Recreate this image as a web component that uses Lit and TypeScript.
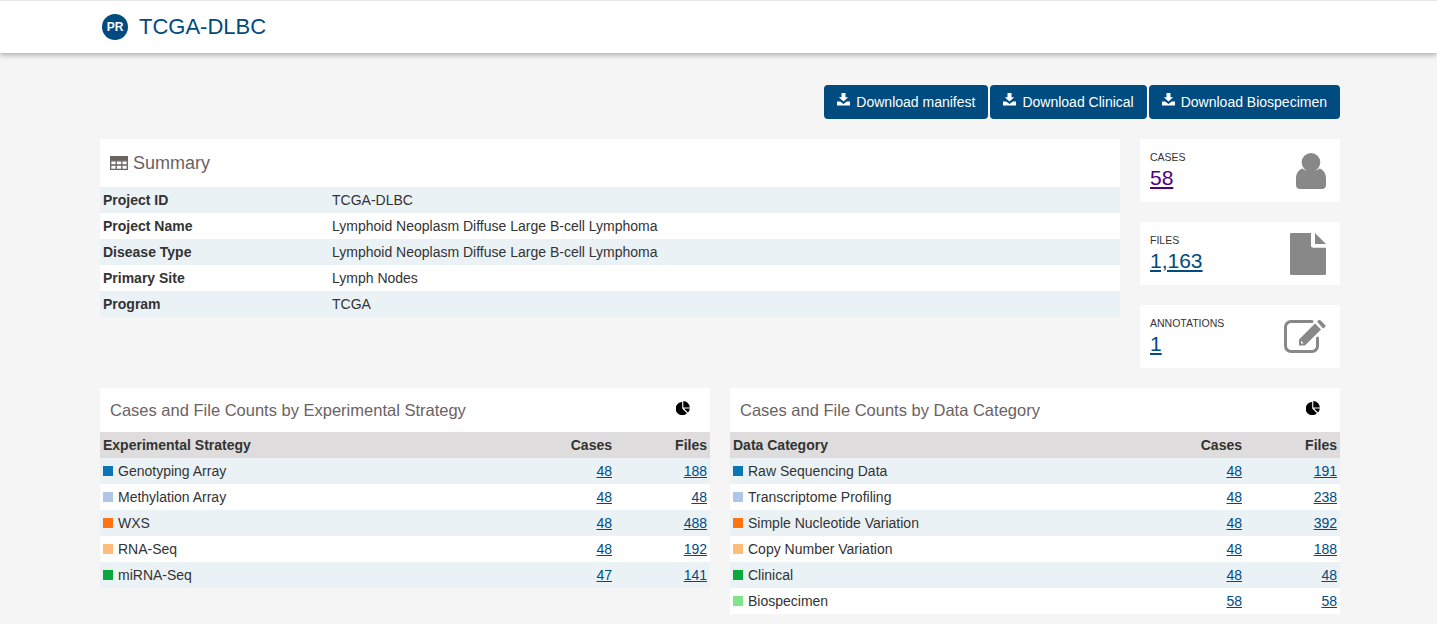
import { LitElement, html, css, svg } from "lit";
import { customElement } from "lit/decorators.js";

const SUMMARY = [
  ["Project ID", "TCGA-DLBC"],
  ["Project Name", "Lymphoid Neoplasm Diffuse Large B-cell Lymphoma"],
  ["Disease Type", "Lymphoid Neoplasm Diffuse Large B-cell Lymphoma"],
  ["Primary Site", "Lymph Nodes"],
  ["Program", "TCGA"],
];

const STRATEGY = [
  ["#0a75b5", "Genotyping Array", "48", "188"],
  ["#aec7e8", "Methylation Array", "48", "48"],
  ["#ff7310", "WXS", "48", "488"],
  ["#ffbb78", "RNA-Seq", "48", "192"],
  ["#0aa83c", "miRNA-Seq", "47", "141"],
];

const CATEGORY = [
  ["#0a75b5", "Raw Sequencing Data", "48", "191"],
  ["#aec7e8", "Transcriptome Profiling", "48", "238"],
  ["#ff7310", "Simple Nucleotide Variation", "48", "392"],
  ["#ffbb78", "Copy Number Variation", "48", "188"],
  ["#0aa83c", "Clinical", "48", "48"],
  ["#7fe58d", "Biospecimen", "58", "58"],
];

const downloadIcon = svg`<svg class="dl" viewBox="0 0 13 13" width="13" height="13">
  <path fill="#fff" d="M4.5 0h4v4.2h2.7L6.5 8.6 1.8 4.2h2.7z"/>
  <path fill="#fff" d="M0 8.4h3.2l3.3 2.6 3.3-2.6H13V12.4H0z"/>
</svg>`;

const tableIcon = svg`<svg viewBox="0 0 18 14" width="18" height="14">
  <path fill="none" stroke="#6b6262" stroke-width="1.3" d="M.7.7h16.6v12.6H.7zM.7 4.8h16.6M.7 9h16.6M6.2 4.8v8.5M11.8 4.8v8.5"/>
  <path fill="#6b6262" d="M.7.7h16.6v4H.7z"/>
</svg>`;

const pieIcon = svg`<svg viewBox="0 0 14 14" width="14" height="14">
  <path d="M6.2 1v6.6l4.7 4.7A6.6 6.6 0 1 1 6.2 1z"/>
  <path d="M7.3 0a6.6 6.6 0 0 1 6.5 6.4H7.3z"/>
  <path d="M8.1 7.6h5.7a6.6 6.6 0 0 1-1.9 3.9z"/>
</svg>`;

const userIcon = svg`<svg viewBox="0 0 30 36" width="30" height="36">
  <circle cx="15" cy="9.3" r="9.3" fill="#888"/>
  <path fill="#888" d="M6.5 15.5C9 18.6 21 18.6 23.5 15.5 27.6 16.8 30 20.5 30 26v6.2c0 2.2-1.7 3.8-3.8 3.8H3.8C1.7 36 0 34.4 0 32.2V26c0-5.5 2.4-9.2 6.5-10.500z"/>
</svg>`;

const fileIcon = svg`<svg viewBox="0 0 36 42" width="36" height="42">
  <path fill="#888" d="M1.500 0H21v12.500c0 1.300 1 2.300 2.300 2.300H36V40.500c0 .8-.7 1.500-1.500 1.500H1.500C.7 42 0 41.300 0 40.500V1.500C0 .7.7 0 1.500 0z"/>
  <path fill="#888" d="M25 0l11 11H25z"/>
</svg>`;

const editIcon = svg`<svg viewBox="0 0 42 33" width="42" height="33">
  <path fill="none" stroke="#888" stroke-width="3" stroke-linecap="round" d="M28 1.500H7A5.500 5.500 0 0 0 1.500 7v19A5.500 5.500 0 0 0 7 31.500h21a5.500 5.500 0 0 0 5.500-5.500V18"/>
  <path fill="#888" d="M15 19.500 31 3.500l6 6-16 16h-6z"/>
  <path fill="#888" d="M33 1.500l1.600-1.300c.6-.4 1.300-.4 1.800.1l4.800 4.800c.5.500.5 1.200 0 1.800L39 8.500z"/>
  <path fill="#fff" d="M17 21v2.500h2.500l-1-1.500z"/>
</svg>`;

@customElement("count-table")
export class CountTable extends LitElement {
  static properties = {
    heading: { type: String },
    label: { type: String },
    rows: { type: Array },
  };

  declare heading: string;
  declare label: string;
  declare rows: string[][];

  static styles = css`
    :host {
      display: block;
    }
    .title {
      height: 44px;
      background: #fff;
      padding: 0 10px;
      display: flex;
      justify-content: space-between;
      color: #6b6262;
      font-size: 16.500px;
    }
    .title span {
      line-height: 45px;
    }
    .title svg {
      margin: 13px 10px 0 0;
    }
    .row {
      display: grid;
      grid-template-columns: 1fr 95px 95px;
      height: 26px;
      line-height: 26px;
      padding: 0 3px;
      color: #333;
    }
    .row.head {
      background: #dedcdc;
      font-weight: 700;
    }
    .row:nth-child(even) {
      background: #ebf2f6;
    }
    .row:nth-child(odd) {
      background: #fff;
    }
    .row.head:nth-child(odd) {
      background: #dedcdc;
    }
    .num {
      text-align: right;
    }
    .name {
      display: flex;
      align-items: center;
    }
    .swatch {
      width: 10px;
      height: 10px;
      margin-right: 5px;
    }
    a {
      color: #004b80;
      text-decoration: underline;
    }
  `;

  render() {
    return html`
      <div class="title"><span>${this.heading}</span>${pieIcon}</div>
      <div>
        <div class="row head">
          <div>${this.label}</div>
          <div class="num">Cases</div>
          <div class="num">Files</div>
        </div>
        ${(this.rows || []).map(
          (r) => html`<div class="row">
            <div class="name"><span class="swatch" style="background:${r[0]}"></span>${r[1]}</div>
            <div class="num"><a href="#">${r[2]}</a></div>
            <div class="num"><a href="#">${r[3]}</a></div>
          </div>`
        )}
      </div>
    `;
  }
}

@customElement("app-root")
export class AppRoot extends LitElement {
  static styles = css`
    :host {
      display: block;
      min-height: 624px;
      height: 624px;
      overflow: hidden;
      background: #f5f5f5;
      font-family: "Liberation Sans", Arial, sans-serif;
      font-size: 14px;
      color: #333;
    }
    .header {
      height: 52px;
      background: #fff;
      border-top: 1px solid #e8e8e8;
      box-shadow: 0 2px 5px rgba(0, 0, 0, 0.3);
      padding-left: 102px;
      display: flex;
      align-items: center;
      gap: 11px;
    }
    .badge {
      width: 26px;
      height: 26px;
      border-radius: 50%;
      background: #004b80;
      color: #fff;
      font-size: 12px;
      font-weight: 700;
      display: flex;
      align-items: center;
      justify-content: center;
      margin-top: -1px;
    }
    .project {
      font-size: 22px;
      color: #004b80;
      margin-top: -1px;
    }
    .page {
      padding: 32px 97px 0 100px;
    }
    .actions {
      display: flex;
      justify-content: flex-end;
      gap: 2px;
      height: 34px;
      margin-bottom: 20px;
    }
    .btn {
      display: flex;
      align-items: center;
      gap: 6px;
      background: #004b80;
      color: #fff;
      border-radius: 4px;
      padding: 0 13px;
      font-size: 14px;
    }
    .dl {
      margin-top: -5px;
    }
    .top {
      display: grid;
      grid-template-columns: 1020px 200px;
      gap: 20px;
    }
    .summary-title {
      height: 48px;
      background: #fff;
      padding-left: 10px;
      display: flex;
      align-items: center;
      gap: 5px;
      color: #6b6262;
      font-size: 18px;
    }
    .summary-row {
      display: grid;
      grid-template-columns: 229px 1fr;
      height: 26px;
      line-height: 26px;
      padding-left: 3px;
      background: #fff;
    }
    .summary-row:nth-child(odd) {
      background: #ebf2f6;
    }
    .summary-row b {
      font-weight: 700;
    }
    .stats {
      display: flex;
      flex-direction: column;
      gap: 20px;
    }
    .stat {
      height: 63px;
      background: #fff;
      padding: 0 10px;
      display: flex;
      justify-content: space-between;
      align-items: center;
    }
    .stat-label {
      font-size: 10.500px;
      line-height: 12px;
      color: #333;
      margin-bottom: 3px;
    }
    .stat-value {
      font-size: 21px;
      line-height: 24px;
      color: #004b80;
      text-decoration: underline;
      display: block;
    }
    .stat-value.visited {
      color: #4f0080;
    }
    .stat svg {
      margin-right: 4px;
    }
    .stat svg.wide {
      margin-right: -2px;
    }
    .bottom {
      display: grid;
      grid-template-columns: 610px 610px;
      gap: 20px;
      margin-top: 20px;
    }
  `;

  render() {
    return html`
      <div class="header">
        <div class="badge">PR</div>
        <div class="project">TCGA-DLBC</div>
      </div>
      <div class="page">
        <div class="actions">
          <div class="btn">${downloadIcon}<span>Download manifest</span></div>
          <div class="btn">${downloadIcon}<span>Download Clinical</span></div>
          <div class="btn">${downloadIcon}<span>Download Biospecimen</span></div>
        </div>
        <div class="top">
          <div>
            <div class="summary-title">${tableIcon}<span>Summary</span></div>
            <div>
              ${SUMMARY.map(
                (r) => html`<div class="summary-row"><b>${r[0]}</b><span>${r[1]}</span></div>`
              )}
            </div>
          </div>
          <div class="stats">
            <div class="stat">
              <div>
                <div class="stat-label">CASES</div>
                <a class="stat-value visited" href="#">58</a>
              </div>
              ${userIcon}
            </div>
            <div class="stat">
              <div>
                <div class="stat-label">FILES</div>
                <a class="stat-value" href="#">1,163</a>
              </div>
              ${fileIcon}
            </div>
            <div class="stat">
              <div>
                <div class="stat-label">ANNOTATIONS</div>
                <a class="stat-value" href="#">1</a>
              </div>
              ${editIcon}
            </div>
          </div>
        </div>
        <div class="bottom">
          <count-table
            heading="Cases and File Counts by Experimental Strategy"
            label="Experimental Strategy"
            .rows=${STRATEGY}
          ></count-table>
          <count-table
            heading="Cases and File Counts by Data Category"
            label="Data Category"
            .rows=${CATEGORY}
          ></count-table>
        </div>
      </div>
    `;
  }
}
